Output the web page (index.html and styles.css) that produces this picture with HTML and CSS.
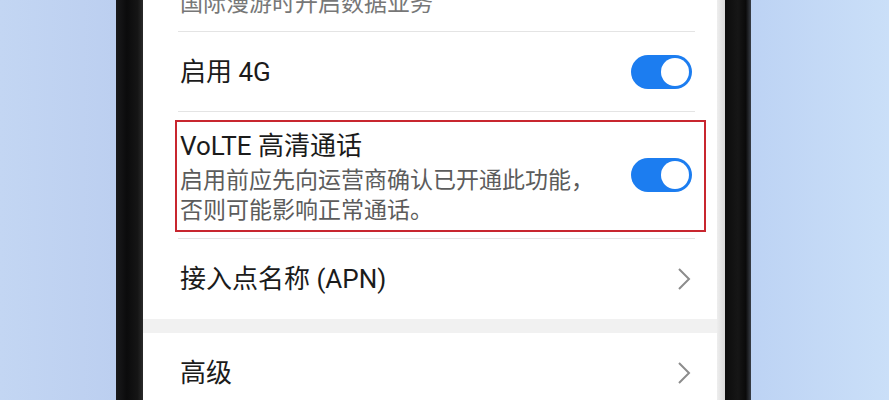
FILE: index.html
```html
<!doctype html>
<html lang="zh-CN">
  <head>
    <meta charset="UTF-8" />
    <meta name="viewport" content="width=device-width, initial-scale=1.0" />
    <title>移动网络</title>
    <link rel="stylesheet" href="styles.css">
  </head>
  <body>
    <div class="desk">
      <div class="side left"></div>
      <div class="bezel"></div>
      <div class="screen">
        <div class="group">
          <div class="row top">
            <p class="sub">国际漫游时开启数据业务</p>
          </div>
          <div class="row">
            <p class="title">启用 4G</p>
            <span class="toggle"></span>
          </div>
          <div class="row volte">
            <div class="text">
              <p class="title">VoLTE 高清通话</p>
              <p class="sub">启用前应先向运营商确认已开通此功能，<br>否则可能影响正常通话。</p>
            </div>
            <span class="toggle"></span>
            <div class="mark"></div>
          </div>
          <div class="row last">
            <p class="title">接入点名称 (APN)</p>
            <svg class="chevron" width="14" height="24" viewBox="0 0 14 24">
              <polyline points="2,2 12,12 2,22" />
            </svg>
          </div>
        </div>
        <div class="band"></div>
        <div class="group">
          <div class="row last">
            <p class="title">高级</p>
            <svg class="chevron" width="14" height="24" viewBox="0 0 14 24">
              <polyline points="2,2 12,12 2,22" />
            </svg>
          </div>
        </div>
      </div>
      <div class="edge"></div>
      <div class="bezel right-bezel"></div>
      <div class="side right"></div>
    </div>
  </body>
</html>
```

FILE: styles.css
```css
* {
  box-sizing: border-box;
}
html,
body {
  margin: 0;
  height: 400px;
  overflow: hidden;
}
body {
  font-family: Roboto, "Noto Sans CJK SC", sans-serif;
}
.desk {
  display: flex;
  height: 400px;
}
.side {
  height: 100%;
}
.left {
  width: 116px;
  background: linear-gradient(90deg, #c3d6f3 0%, #bccff0 100%);
}
.right {
  flex: 1;
  background: linear-gradient(90deg, #bdd3f4 0%, #cadff8 100%);
}
.bezel {
  width: 27px;
  background: linear-gradient(90deg, #1a1a1c 0%, #0b0b0c 40%, #151515 80%, #2a2a2a 100%);
}
.right-bezel {
  width: 26px;
  background: linear-gradient(90deg, #0c0c0c 0%, #161616 50%, #0a0a0a 80%, #3a3f48 100%);
}
.edge {
  width: 8px;
  background: linear-gradient(90deg, #eeeeee 0%, #d9d9d9 100%);
}
.screen {
  width: 574px;
  background: #ffffff;
}
.group {
  padding: 0 22px 0 35px;
}
.row {
  position: relative;
  display: flex;
  align-items: center;
  justify-content: space-between;
  height: 80px;
  border-bottom: 1px solid #e4e4e4;
}
.row.last {
  border-bottom: none;
}
.row.top {
  height: auto;
  margin-top: -11px;
  padding: 0 0 12px 2px;
}
.row.volte {
  height: 127px;
}
p {
  margin: 0;
}
.title {
  padding-left: 2px;
  font-size: 26px;
  line-height: 34px;
  color: #1b1b1b;
}
.sub {
  font-size: 23px;
  line-height: 30px;
  color: #5c5c5c;
}
.row.top .sub {
  color: #777777;
}
.volte .text {
  padding-left: 2px;
}
.volte .title {
  padding-left: 0;
  margin: 4px 0 3px;
}
.toggle {
  position: relative;
  width: 61px;
  height: 34px;
  margin-right: 3px;
  border-radius: 17px;
  background: #1c7df0;
}
.toggle::after {
  content: "";
  position: absolute;
  top: 3px;
  right: 3px;
  width: 28px;
  height: 28px;
  border-radius: 50%;
  background: #ffffff;
}
.chevron {
  margin-right: 4px;
}
.chevron polyline {
  fill: none;
  stroke: #8c8c8c;
  stroke-width: 2;
}
.band {
  height: 14px;
  background: #f1f1f1;
}
.mark {
  position: absolute;
  top: 8px;
  bottom: 6px;
  left: -3px;
  right: -11px;
  border: 2px solid #c8262f;
}
```
